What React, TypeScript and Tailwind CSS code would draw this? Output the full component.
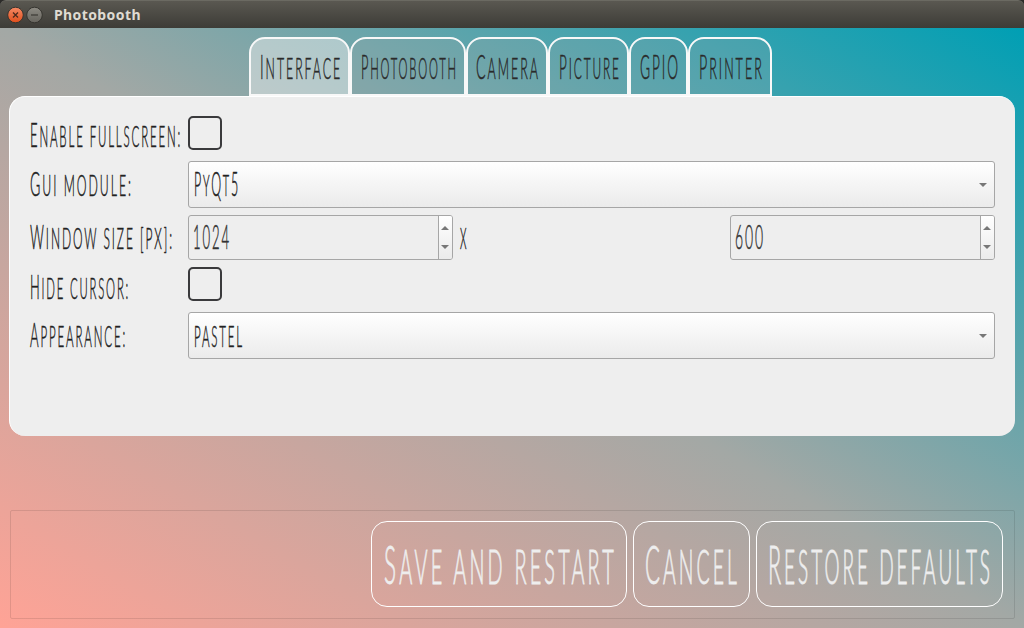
import { useLayoutEffect, useRef, useState } from "react";

type CapsProps = { text: string; width: number; size: string; className?: string };

// Narrow hand-lettered caps: lowercase letters are drawn as slightly shorter capitals.
function Caps({ text, width, size, className = "" }: CapsProps) {
  const ref = useRef<HTMLSpanElement>(null);
  const [scale, setScale] = useState(0.4);
  useLayoutEffect(() => {
    if (ref.current) setScale(width / ref.current.offsetWidth);
  }, [text, width]);
  const runs = text.match(/[a-z :\[\]]+|[^a-z :\[\]]+/g) ?? [];
  return (
    <span className={`block shrink-0 whitespace-nowrap leading-none ${size} ${className}`} style={{ width }}>
      <span ref={ref} className="inline-block origin-left tracking-[0.14em] [-webkit-text-stroke:0.016em_currentColor]" style={{ transform: `scaleX(${scale})` }}>
        {runs.map((run, i) => (
          <span key={i} className={/^[a-z :\[\]]/.test(run) ? "text-[0.88em] uppercase" : ""}>{run}</span>
        ))}
      </span>
    </span>
  );
}

const tabs = [
  { name: "Interface", box: "w-[101px]", width: 82 },
  { name: "Photobooth", box: "w-[116px]", width: 97 },
  { name: "Camera", box: "w-[82px]", width: 64 },
  { name: "Picture", box: "w-[81px]", width: 62 },
  { name: "GPIO", box: "w-[59px]", width: 40 },
  { name: "Printer", box: "w-[84px]", width: 65 },
];

const buttons = [
  { name: "Save and restart", box: "w-[256px]", width: 233 },
  { name: "Cancel", box: "w-[117px]", width: 95 },
  { name: "Restore defaults", box: "w-[247px]", width: 225 },
];

function Arrow({ up = false }: { up?: boolean }) {
  return (
    <svg viewBox="0 0 8 4" className={`h-1 w-2 shrink-0 ${up ? "rotate-180" : ""}`}>
      <path d="M0 0H8L4 4Z" fill="#777" />
    </svg>
  );
}

function Label({ text, width, drop }: { text: string; width: number; drop: string }) {
  return (
    <div className={`w-[158px] shrink-0 text-[#222] ${drop}`}>
      <Caps text={text} width={width} size="text-[32.5px]" />
    </div>
  );
}

function Check() {
  return <div className="mb-1 size-[34px] rounded-[5px] border-2 border-[#3a3a3c]" />;
}

function Select({ text, width }: { text: string; width: number }) {
  return (
    <div className="flex h-[47px] flex-1 items-center justify-between rounded-[3px] border border-[#a6a6a6] bg-linear-to-b from-white to-[#ebebeb] pr-[7px] pl-[5px] text-[#222]">
      <Caps text={text} width={width} size="text-[32.5px]" />
      <Arrow />
    </div>
  );
}

function Spin({ text, width }: { text: string; width: number }) {
  return (
    <div className="flex h-[45px] w-[265px] shrink-0 overflow-hidden rounded-[3px] border border-[#a6a6a6] bg-[#eee] text-[#333]">
      <div className="flex flex-1 items-center pl-[4px]">
        <Caps text={text} width={width} size="text-[32.5px]" />
      </div>
      <div className="flex w-[14px] flex-col items-center justify-center gap-[15px] border-l border-[#a6a6a6] bg-linear-to-b from-white to-[#ebebeb] pr-px">
        <Arrow up />
        <Arrow />
      </div>
    </div>
  );
}

export default function App() {
  return (
    <div className="flex h-[628px] w-[1024px] flex-col overflow-hidden bg-[#2c2b29] font-['Lato',sans-serif] font-light">
      <header className="flex h-7 shrink-0 items-center rounded-t-md border-t border-[#6b6a62] bg-linear-to-b from-[#5a5851] to-[#3d3c37] pl-[7px]">
        <svg viewBox="0 0 38 18" className="h-[18px] w-[38px]">
          <defs>
            <linearGradient id="close" x2="0" y2="1"><stop stopColor="#f58a65" /><stop offset="1" stopColor="#e04e1b" /></linearGradient>
            <linearGradient id="mini" x2="0" y2="1"><stop stopColor="#8d8b83" /><stop offset="1" stopColor="#66645d" /></linearGradient>
          </defs>
          <circle cx="8.5" cy="9" r="7.8" fill="url(#close)" stroke="#35342f" />
          <path d="M6 6.5L11 11.5M11 6.5L6 11.5" stroke="#4b2a1d" strokeWidth="1.3" />
          <circle cx="27.5" cy="9" r="7.8" fill="url(#mini)" stroke="#35342f" />
          <path d="M24 9H31" stroke="#3b3a35" strokeWidth="1.2" />
        </svg>
        <span className="ml-[9px] font-['Noto_Sans',sans-serif] text-[14px] font-bold tracking-[0.4px] text-[#dfdbd2]">Photobooth</span>
      </header>
      <main className="flex flex-1 flex-col bg-[linear-gradient(to_top_right,#ffa396,#a3a8a5_50%,#009fb4)] px-[9px] pt-[9px] pb-[9px]">
        <nav className="flex h-[59px] shrink-0 pl-[240px]">
          {tabs.map((tab, i) => (
            <div key={tab.name} className={`flex shrink-0 justify-center rounded-t-[16px] border-2 border-[#f8f8f8] pt-[12px] pl-[2px] text-[#2a2a2a] ${tab.box} ${i === 0 ? "bg-[#eee]/50" : "bg-[#aaa]/20"}`}>
              <Caps text={tab.name} width={tab.width} size="text-[32.5px]" />
            </div>
          ))}
        </nav>
        <section className="flex h-[340px] w-[1006px] shrink-0 flex-col rounded-[16px] border-t border-l border-white bg-[#eee] pt-[19px] pr-[20px] pl-[20px]">
          <div className="flex h-[45px] items-start"><Label text="Enable fullscreen:" width={152} drop="pt-[3px]" /><Check /></div>
          <div className="flex h-[54px] items-start"><Label text="Gui module:" width={103} drop="pt-[7px]" /><Select text="PyQt5" width={46} /></div>
          <div className="flex h-[52px] items-start">
            <Label text="Window size [px]:" width={144} drop="pt-[6px]" />
            <Spin text="1024" width={38} />
            <div className="flex-1 pt-[6px] pl-[7px] text-[#222]"><Caps text="x" width={8} size="text-[32.5px]" /></div>
            <Spin text="600" width={30} />
          </div>
          <div className="flex h-[45px] items-start"><Label text="Hide cursor:" width={100} drop="pt-[4px]" /><Check /></div>
          <div className="flex h-[54px] items-start"><Label text="Appearance:" width={97} drop="pt-[7px]" /><Select text="pastel" width={50} /></div>
        </section>
        <footer className="mt-auto ml-px flex h-[109px] w-[1005px] shrink-0 items-start justify-end gap-[6px] rounded-[2px] border border-black/10 pt-[10px] pr-[11px]">
          {buttons.map((button) => (
            <button key={button.name} className={`flex h-[86px] shrink-0 items-center justify-center rounded-[16px] border border-white pl-[2px] text-[#eee] ${button.box}`}>
              <Caps text={button.name} width={button.width} size="text-[54px]" />
            </button>
          ))}
        </footer>
      </main>
    </div>
  );
}
